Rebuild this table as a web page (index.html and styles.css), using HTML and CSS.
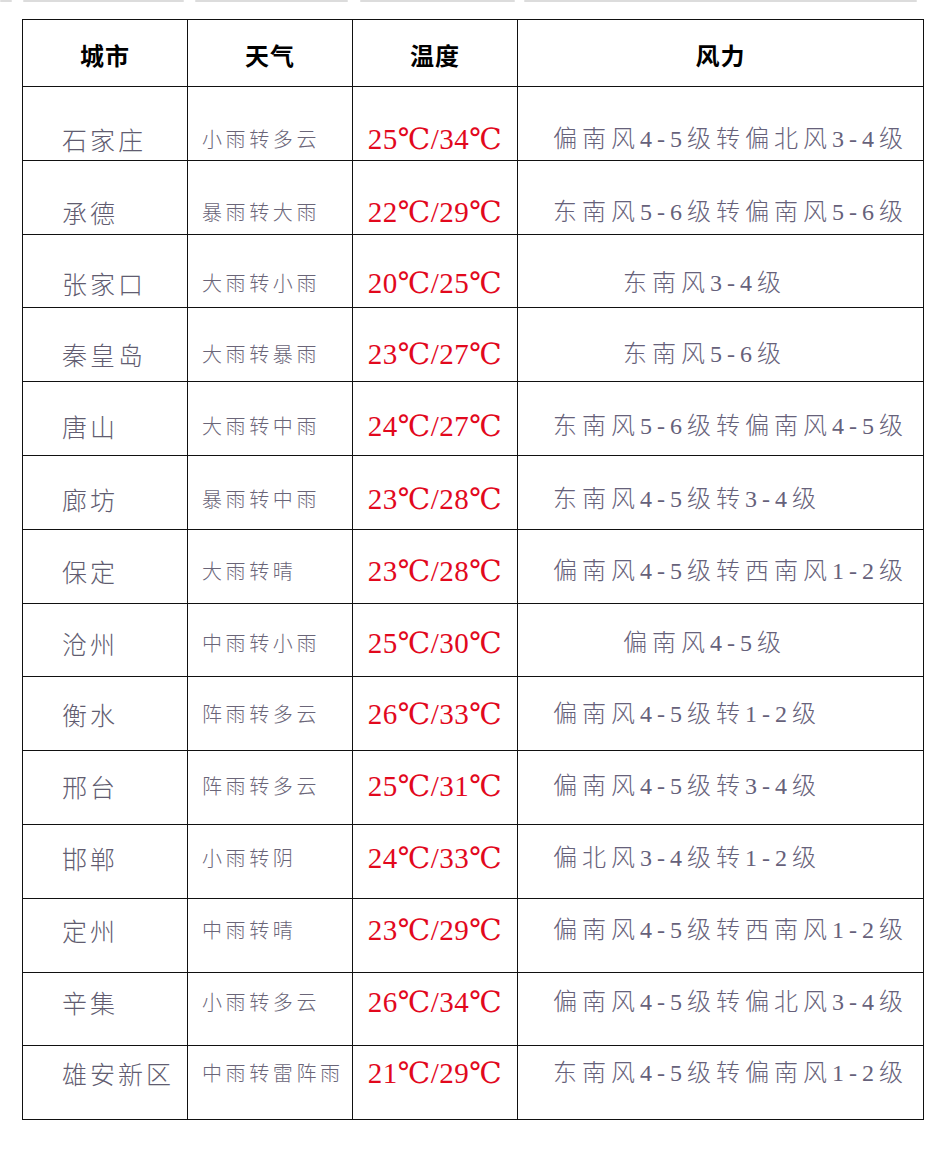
FILE: index.html
```html
<!DOCTYPE html>
<html lang="zh-CN">
<head>
<meta charset="utf-8">
<title>河北天气</title>
<link rel="stylesheet" href="styles.css">
</head>
<body>
<div class="topbars">
  <span class="bar b1"></span>
  <span class="bar b2"></span>
  <span class="bar b3"></span>
  <span class="bar b4"></span>
  <span class="bar b5"></span>
</div>
<table class="weather">
  <colgroup>
    <col class="c-city"><col class="c-wx"><col class="c-temp"><col class="c-wind">
  </colgroup>
  <thead>
    <tr class="head"><th>城市</th><th>天气</th><th>温度</th><th>风力</th></tr>
  </thead>
  <tbody>
    <tr><td class="city">石家庄</td><td class="wx">小雨转多云</td><td class="temp">25℃/34℃</td><td class="wind">偏南风4-5级转偏北风3-4级</td></tr>
    <tr><td class="city">承德</td><td class="wx">暴雨转大雨</td><td class="temp">22℃/29℃</td><td class="wind">东南风5-6级转偏南风5-6级</td></tr>
    <tr><td class="city">张家口</td><td class="wx">大雨转小雨</td><td class="temp">20℃/25℃</td><td class="wind indent">东南风3-4级</td></tr>
    <tr><td class="city">秦皇岛</td><td class="wx">大雨转暴雨</td><td class="temp">23℃/27℃</td><td class="wind indent">东南风5-6级</td></tr>
    <tr><td class="city">唐山</td><td class="wx">大雨转中雨</td><td class="temp">24℃/27℃</td><td class="wind">东南风5-6级转偏南风4-5级</td></tr>
    <tr><td class="city">廊坊</td><td class="wx">暴雨转中雨</td><td class="temp">23℃/28℃</td><td class="wind">东南风4-5级转3-4级</td></tr>
    <tr><td class="city">保定</td><td class="wx">大雨转晴</td><td class="temp">23℃/28℃</td><td class="wind">偏南风4-5级转西南风1-2级</td></tr>
    <tr><td class="city">沧州</td><td class="wx">中雨转小雨</td><td class="temp">25℃/30℃</td><td class="wind indent">偏南风4-5级</td></tr>
    <tr><td class="city">衡水</td><td class="wx">阵雨转多云</td><td class="temp">26℃/33℃</td><td class="wind">偏南风4-5级转1-2级</td></tr>
    <tr><td class="city">邢台</td><td class="wx">阵雨转多云</td><td class="temp">25℃/31℃</td><td class="wind">偏南风4-5级转3-4级</td></tr>
    <tr><td class="city">邯郸</td><td class="wx">小雨转阴</td><td class="temp">24℃/33℃</td><td class="wind">偏北风3-4级转1-2级</td></tr>
    <tr><td class="city">定州</td><td class="wx">中雨转晴</td><td class="temp">23℃/29℃</td><td class="wind">偏南风4-5级转西南风1-2级</td></tr>
    <tr><td class="city">辛集</td><td class="wx">小雨转多云</td><td class="temp">26℃/34℃</td><td class="wind">偏南风4-5级转偏北风3-4级</td></tr>
    <tr><td class="city">雄安新区</td><td class="wx">中雨转雷阵雨</td><td class="temp">21℃/29℃</td><td class="wind">东南风4-5级转偏南风1-2级</td></tr>
  </tbody>
</table>
</body>
</html>
```

FILE: styles.css
```css
html, body {
  margin: 0;
  padding: 0;
  background: #ffffff;
}

body {
  width: 942px;
  height: 1150px;
  overflow: hidden;
  font-family: "Liberation Serif", "Times New Roman", "DejaVu Serif", "Noto Sans CJK SC", serif;
}

.topbars {
  position: relative;
  height: 19px;
}

.bar {
  position: absolute;
  top: 0;
  height: 2px;
  background: #dcdcdc;
  border-radius: 1px;
}
.b1 { left: 0; width: 12px; }
.b2 { left: 23px; width: 161px; }
.b3 { left: 195px; width: 153px; }
.b4 { left: 360px; width: 155px; }
.b5 { left: 524px; width: 393px; }

.weather {
  margin-left: 22px;
  border-collapse: collapse;
  table-layout: fixed;
  width: 901px;
}

.c-city { width: 165px; }
.c-wx { width: 165px; }
.c-temp { width: 165px; }
.c-wind { width: 406px; }

.weather th,
.weather td {
  border: 1.5px solid #111111;
  padding: 0;
  white-space: nowrap;
  overflow: hidden;
}

.weather .head th {
  height: 64px;
  font-family: "Noto Sans CJK SC", sans-serif;
  font-weight: 700;
  font-size: 24px;
  letter-spacing: 1px;
  color: #000000;
  text-align: center;
  vertical-align: middle;
  padding-top: 2px;
}

.weather tbody tr {
  height: 73.8px;
}

.weather tbody td {
  vertical-align: top;
  line-height: 30px;
  padding-top: var(--pt, 30px);
  color: #615c70;
}

.weather tbody tr:nth-child(1)  { --pt: 37px; }
.weather tbody tr:nth-child(2)  { --pt: 36px; }
.weather tbody tr:nth-child(3)  { --pt: 33px; }
.weather tbody tr:nth-child(4)  { --pt: 31px; }
.weather tbody tr:nth-child(5)  { --pt: 29px; }
.weather tbody tr:nth-child(6)  { --pt: 28px; }
.weather tbody tr:nth-child(7)  { --pt: 26px; }
.weather tbody tr:nth-child(8)  { --pt: 24px; }
.weather tbody tr:nth-child(9)  { --pt: 22px; }
.weather tbody tr:nth-child(10) { --pt: 20px; }
.weather tbody tr:nth-child(11) { --pt: 18px; }
.weather tbody tr:nth-child(12) { --pt: 16px; }
.weather tbody tr:nth-child(13) { --pt: 14px; }
.weather tbody tr:nth-child(14) { --pt: 12px; }

.weather tbody td.city {
  font-family: "Noto Sans CJK SC", sans-serif;
  font-weight: 300;
  font-size: 25px;
  letter-spacing: 3px;
  padding-left: 39px;
}

.weather tbody td.wx {
  font-family: "Noto Sans CJK SC", sans-serif;
  font-weight: 300;
  font-size: 20px;
  letter-spacing: 3.6px;
  padding-left: 14px;
  color: #6a6578;
}

.weather tbody td.temp {
  font-family: "Liberation Serif", "Times New Roman", "DejaVu Serif", "Noto Sans CJK SC", serif;
  font-size: 29px;
  letter-spacing: 0.5px;
  color: #e2081d;
  text-align: center;
}

.weather tbody td.wind {
  font-family: "Liberation Serif", "Times New Roman", "DejaVu Serif", "Noto Sans CJK SC", serif;
  font-weight: 300;
  font-size: 24px;
  letter-spacing: 5px;
  padding-left: 35px;
  color: #66617a;
}

.weather tbody td.wind.indent {
  padding-left: 105px;
}
```
